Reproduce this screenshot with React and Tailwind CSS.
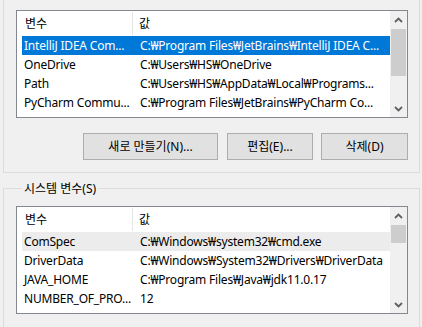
import React from "react";

const Up = () => (
  <svg width="9" height="6" viewBox="0 0 9 6" fill="none">
    <path d="M1 5 L4.5 1.5 L8 5" stroke="#606060" strokeWidth="1.8" />
  </svg>
);
const Down = () => (
  <svg width="9" height="6" viewBox="0 0 9 6" fill="none">
    <path d="M1 1 L4.5 4.5 L8 1" stroke="#606060" strokeWidth="1.8" />
  </svg>
);

function ListView({ rows, thumbTop, thumbH, highlight }) {
  return (
    <div className="w-[392px] h-[108px] border border-[#828790] bg-white flex overflow-hidden">
      <div className="flex-1 flex flex-col min-w-0">
        <div className="h-[25px] flex items-stretch shrink-0">
          <div className="ml-[5px] w-[111px] pl-[3px] flex items-center border-r border-[#e5e5e5] my-[1px]">변수</div>
          <div className="pl-[6px] flex items-center">값</div>
        </div>
        {rows.map((r, i) => {
          const sel = i === 0 && highlight === "blue";
          const hov = i === 0 && highlight === "gray";
          return (
            <div
              key={i}
              className={
                "ml-[5px] h-[19px] flex items-center whitespace-nowrap shrink-0 tracking-[-0.2px] " +
                (sel ? "bg-[#0078d7] text-white" : hov ? "bg-[#ececec]" : "")
              }
            >
              <div className="w-[112px] pl-[2px] overflow-hidden">{r[0]}</div>
              <div className="pl-[6px]">{r[1]}</div>
            </div>
          );
        })}
      </div>
      <div className="w-[17px] h-full bg-[#f0f0f0] flex flex-col shrink-0">
        <div className="h-[17px] flex items-center justify-center shrink-0">
          <Up />
        </div>
        <div className="flex-1 relative">
          <div
            className="absolute left-[1px] right-[1px] bg-[#cdcdcd]"
            style={{ top: thumbTop, height: thumbH }}
          />
        </div>
        <div className="h-[17px] flex items-center justify-center shrink-0">
          <Down />
        </div>
      </div>
    </div>
  );
}

export default function App() {
  const userRows = [
    ["IntelliJ IDEA Com...", "C:₩Program Files₩JetBrains₩IntelliJ IDEA C..."],
    ["OneDrive", "C:₩Users₩HS₩OneDrive"],
    ["Path", "C:₩Users₩HS₩AppData₩Local₩Programs..."],
    ["PyCharm Commu...", "C:₩Program Files₩JetBrains₩PyCharm Co..."],
  ];
  const sysRows = [
    ["ComSpec", "C:₩Windows₩system32₩cmd.exe"],
    ["DriverData", "C:₩Windows₩System32₩Drivers₩DriverData"],
    ["JAVA_HOME", "C:₩Program Files₩Java₩jdk11.0.17"],
    ["NUMBER_OF_PRO...", "12"],
  ];
  const btn =
    "h-[27px] bg-[#e1e1e1] border border-[#adadad] flex items-center justify-center text-black";
  return (
    <div className="w-[422px] h-[327px] bg-[#f0f0f0] overflow-hidden text-[12px] leading-[16px] text-black font-['Noto_Sans','Noto_Sans_CJK_KR',sans-serif]">
      <div className="ml-[3px] w-[417px] border-x border-b border-[#dcdcdc] pt-[10px] pl-[12px] pr-[11px] pb-[12px]">
        <ListView rows={userRows} thumbTop={1} thumbH={47} highlight="blue" />
        <div className="mt-[15px] flex justify-end">
          <div className={btn + " w-[135px]"}>새로 만들기(N)...</div>
          <div className={btn + " w-[86px] ml-[9px]"}>편집(E)...</div>
          <div className={btn + " w-[87px] ml-[8px]"}>삭제(D)</div>
        </div>
      </div>
      <fieldset className="ml-[3px] mt-[7px] w-[417px] border border-[#dcdcdc] pl-[12px] pr-[11px] h-[200px]">
        <legend className="ml-[6px] px-[2px] leading-[17px]">시스템 변수(S)</legend>
        <div className="mt-[9px]">
          <ListView rows={sysRows} thumbTop={1} thumbH={18} highlight="gray" />
        </div>
      </fieldset>
    </div>
  );
}
